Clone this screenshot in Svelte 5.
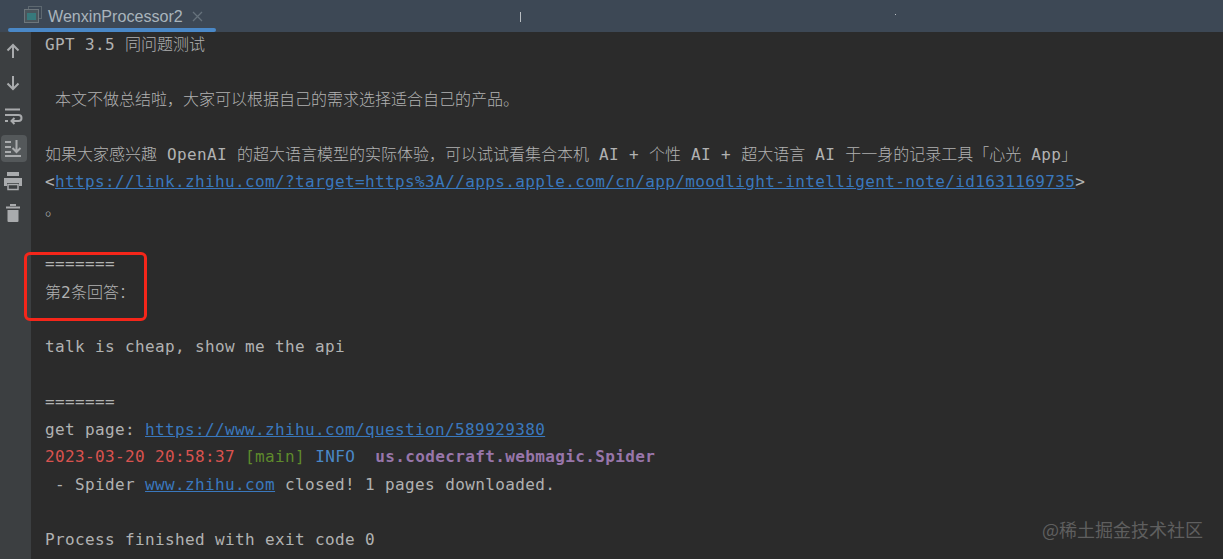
<script>
    const lines = [
        [["GPT 3.5 同问题测试"]],
        [],
        [[" 本文不做总结啦，大家可以根据自己的需求选择适合自己的产品。"]],
        [],
        [["如果大家感兴趣 OpenAI 的超大语言模型的实际体验，可以试试看集合本机 AI + 个性 AI + 超大语言 AI 于一身的记录工具「心光 App」"]],
        [["<"], ["https://link.zhihu.com/?target=https%3A//apps.apple.com/cn/app/moodlight-intelligent-note/id1631169735", "link"], [">"]],
        [["。"]],
        [],
        [["======="]],
        [["第2条回答："]],
        [],
        [["talk is cheap, show me the api"]],
        [],
        [["======="]],
        [["get page: "], ["https://www.zhihu.com/question/589929380", "link"]],
        [["2023-03-20 20:58:37", "red"], [" "], ["[main]", "green"], [" "], ["INFO", "blue"], ["  "], ["us.codecraft.webmagic.Spider", "purple"]],
        [[" - Spider "], ["www.zhihu.com", "link"], [" closed! 1 pages downloaded."]],
        [],
        [["Process finished with exit code 0"]],
    ]

    // cjk text and latin text have different advance widths in the console font
    function runs(text) {
        return text.split(/([\u3000-\u9fff\uff00-\uffef]+)/).filter(Boolean).map((t) => ({
            text: t,
            cjk: /[\u3000-\u9fff\uff00-\uffef]/.test(t),
        }))
    }
</script>

<div class="window">
    <header class="tabs">
        <div class="tab">
            <svg class="tab-icon" width="18" height="18" viewBox="0 0 18 18">
                <rect x="4.500" y="0.500" width="13" height="12" fill="none" stroke="#5d6870" stroke-width="1" />
                <rect x="0.500" y="3.500" width="14" height="13" fill="#4a555c" stroke="#6d767c" stroke-width="1" />
                <rect x="3" y="7" width="9" height="7" fill="#37797c" />
            </svg>
            <span class="tab-name">WenxinProcessor2</span>
            <svg class="tab-close" width="11" height="11" viewBox="0 0 11 11">
                <path d="M1 1l9 9M10 1l-9 9" stroke="#66727c" stroke-width="1.300" fill="none" />
            </svg>
        </div>
        <i class="speck one"></i>
        <i class="speck two"></i>
    </header>

    <div class="body">
        <aside class="tools">
            <button aria-label="Up">
                <svg width="18" height="18" viewBox="0 0 18 18"><path d="M9 16V3M3.500 8.500L9 3l5.500 5.500" /></svg>
            </button>
            <button aria-label="Down">
                <svg width="18" height="18" viewBox="0 0 18 18"><path d="M9 2v13M3.500 9.500L9 15l5.500-5.500" /></svg>
            </button>
            <button aria-label="Soft wrap">
                <svg width="20" height="20" viewBox="0 0 20 20">
                    <path d="M2 3.500h15M2 9h13.500a2.700 2.700 0 0 1 0 6H9M11.500 12L8.500 15l3 3M2 15h3" />
                </svg>
            </button>
            <button class="active" aria-label="Scroll to end">
                <svg width="20" height="20" viewBox="0 0 20 20">
                    <path d="M2 4h6M2 9h6M2 14h6M2 18h16M13.500 2v12M9.500 10l4 4 4-4" />
                </svg>
            </button>
            <button aria-label="Print">
                <svg width="20" height="20" viewBox="0 0 20 20">
                    <rect x="4" y="1" width="12" height="4" fill="#a9abad" />
                    <path class="solid" d="M1 7h18v8h-3v-3H4v3H1z" />
                    <rect x="5" y="13.500" width="10" height="5" fill="none" stroke="#a9abad" stroke-width="1.500" />
                </svg>
            </button>
            <button aria-label="Clear">
                <svg width="18" height="20" viewBox="0 0 18 20">
                    <rect x="6" y="1" width="6" height="2" fill="#a9abad" />
                    <rect x="2" y="3.500" width="14" height="2" fill="#a9abad" />
                    <path class="solid" d="M3.500 7h11v11a1 1 0 0 1-1 1h-9a1 1 0 0 1-1-1z" />
                </svg>
            </button>
        </aside>

        <main class="console">
            {#each lines as line}
                <div class="line">
                    {#each line as seg}
                        <span class={seg[1] ?? ""}>
                            {#each runs(seg[0]) as run}
                                <span class={run.cjk ? "cjk" : "latin"}>{run.text}</span>
                            {/each}
                        </span>
                    {/each}
                </div>
            {/each}

            <div class="highlight"></div>
            <div class="watermark">@稀土掘金技术社区</div>
        </main>
    </div>
</div>

<style>
    :global(body) {
        margin: 0;
        background: #2b2b2b;
    }
    .window {
        width: 1223px;
        height: 559px;
        display: flex;
        flex-direction: column;
        overflow: hidden;
        background: #2b2b2b;
    }
    .tabs {
        position: relative;
        z-index: 1;
        height: 32px;
        flex: none;
        background: #3d4855;
    }
    .tab {
        position: relative;
        width: 216px;
        height: 32px;
        display: flex;
        align-items: center;
        box-sizing: border-box;
        padding-left: 24px;
    }
    .tab::after {
        content: "";
        position: absolute;
        left: 8px;
        right: 0;
        bottom: 0;
        height: 4px;
        border-radius: 2px;
        background: #4a88c7;
    }
    .tab-icon {
        flex: none;
        margin-top: -2px;
    }
    .tab-name {
        margin-left: 6px;
        font: 16.100px "Liberation Sans", Arial, sans-serif;
        color: #a9b4bc;
    }
    .tab-close {
        margin-left: 9px;
    }
    .speck {
        position: absolute;
        background: #b9bec2;
    }
    .speck.one {
        left: 520px;
        top: 12px;
        width: 1px;
        height: 10px;
    }
    .speck.two {
        left: 895px;
        top: 14px;
        width: 1px;
        height: 1px;
    }
    .body {
        flex: 1;
        display: flex;
        min-height: 0;
    }
    .tools {
        width: 31px;
        flex: none;
        background: #3c3f41;
        display: flex;
        flex-direction: column;
        align-items: flex-start;
        padding: 5px 0 0 1px;
        box-sizing: border-box;
    }
    .tools button {
        all: unset;
        width: 26px;
        height: 27px;
        margin-bottom: 5.500px;
        display: flex;
        align-items: center;
        justify-content: center;
        border-radius: 4px;
    }
    .tools button svg {
        margin-left: -2px;
    }
    .tools button.active {
        background: #54585a;
    }
    .tools svg path {
        fill: none;
        stroke: #a9abad;
        stroke-width: 2;
    }
    .tools svg path.solid {
        fill: #a9abad;
        stroke: none;
    }
    .console {
        position: relative;
        flex: 1;
        min-width: 0;
        margin-top: -2px;
        padding-left: 14px;
        font-size: 16px;
        color: #b1b2b2;
    }
    .line {
        height: 27.550px;
        line-height: 27.550px;
        white-space: pre;
    }
    .latin {
        font-family: "DejaVu Sans Mono", monospace;
        letter-spacing: 0.370px;
    }
    .cjk {
        font-family: "Noto Sans CJK SC", sans-serif;
        font-weight: 300;
    }
    .link {
        color: #3a78bd;
        text-decoration: underline;
    }
    .red {
        color: #d9534f;
    }
    .green {
        color: #5e8a2c;
    }
    .blue {
        color: #4a88c7;
    }
    .purple {
        color: #9876aa;
        font-weight: 700;
    }
    .highlight {
        position: absolute;
        left: -7px;
        top: 222px;
        width: 117px;
        height: 63px;
        border: 3px solid #f5261a;
        border-radius: 6px;
    }
    .watermark {
        position: absolute;
        right: 20px;
        bottom: 17px;
        font: 18px "Noto Sans CJK SC", sans-serif;
        color: #5f5f5f;
    }
</style>
